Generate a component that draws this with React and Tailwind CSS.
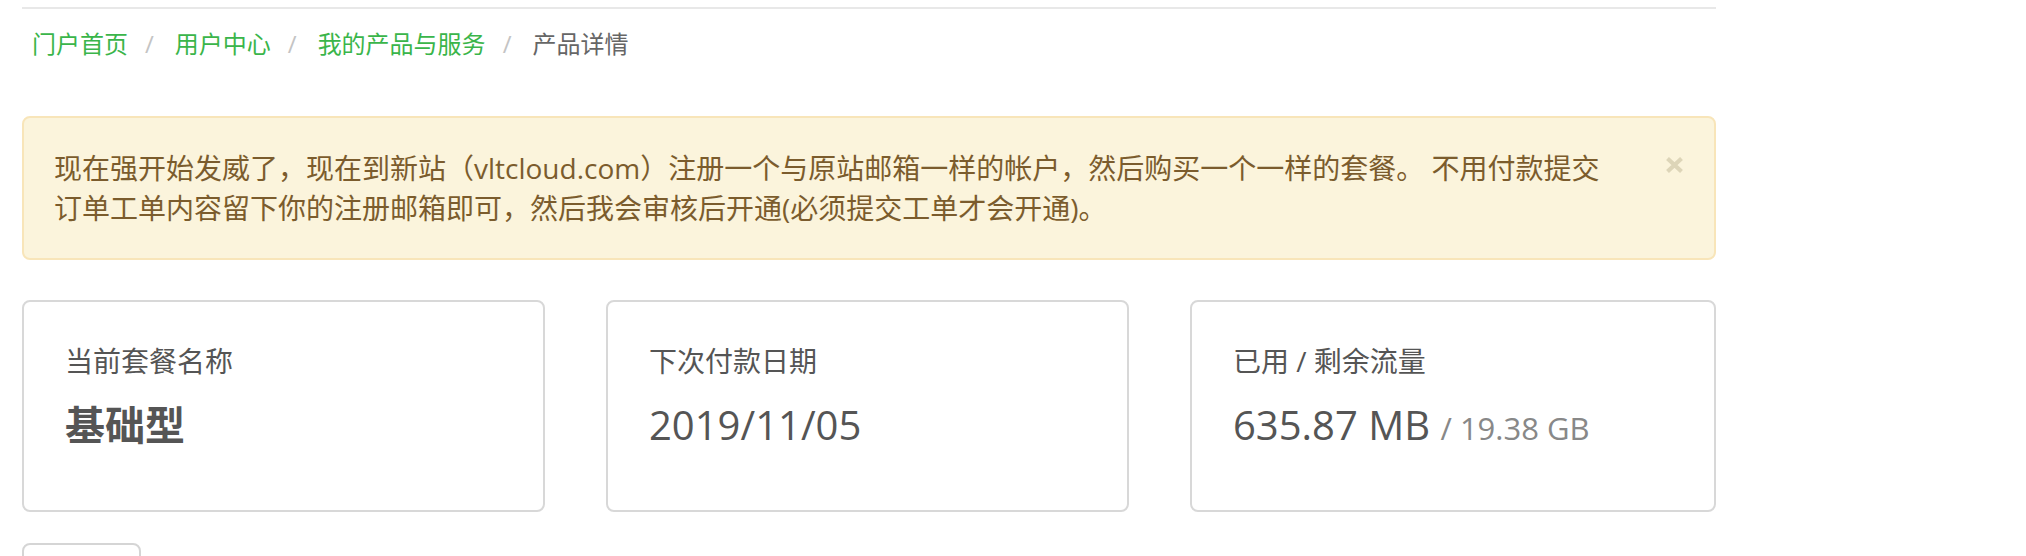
import React from 'react';

const crumbs = ['门户首页', '用户中心', '我的产品与服务'];

const StatCard = ({ title, children }) => (
  <div className="h-[212px] rounded-[8px] border-2 border-[#d8d8d8] bg-white px-[41px] pt-[39px]">
    <div className="text-[28px] leading-[40px] text-[#555]">{title}</div>
    <div className="mt-[22px] text-[40px] leading-[44px] text-[#555]">{children}</div>
  </div>
);

const App = () => {
  return (
    <div
      className="min-h-screen bg-white"
      style={{ fontFamily: '"Open Sans", "Noto Sans CJK SC", sans-serif' }}
    >
      <div className="ml-[22px] w-[1694px]">
        <div className="mt-[7px] h-[2px] bg-[#e8e8e8]" />

        {/* breadcrumb */}
        <nav className="mt-[18px] flex items-center pl-[10px] text-[24px] leading-[34px]">
          {crumbs.map((c) => (
            <React.Fragment key={c}>
              <a href="#" className="text-[#3ab54a]">{c}</a>
              <span className="ml-[17px] mr-[21px] text-[#c4c4c4]">/</span>
            </React.Fragment>
          ))}
          <span className="text-[#666]">产品详情</span>
        </nav>

        {/* notice */}
        <div className="relative mt-[55px] rounded-[8px] border-2 border-[#f8e5b9] bg-[#fbf4dc] py-[30px] pl-[30px] pr-[70px] text-[28px] leading-[40px] text-[#7b5c2d]">
          现在强开始发威了，现在到新站（vltcloud.com）注册一个与原站邮箱一样的帐户，然后购买一个一样的套餐。 不用付款提交
          <br />
          订单工单内容留下你的注册邮箱即可，然后我会审核后开通(必须提交工单才会开通)。
          <button className="absolute right-[20px] top-[27px] flex h-[40px] w-[40px] items-center justify-center">
            <svg width="19" height="18" viewBox="0 0 19 18">
              <path d="M2.5 2.5 L16.5 15.5 M16.5 2.5 L2.5 15.5" stroke="#ddd5b8" strokeWidth="4.2" strokeLinecap="butt" />
            </svg>
          </button>
        </div>

        {/* stats */}
        <div className="mt-[40px] grid grid-cols-[523px_523px_1fr] gap-x-[61px]">
          <StatCard title="当前套餐名称">
            <span className="font-bold">基础型</span>
          </StatCard>
          <StatCard title="下次付款日期">2019/11/05</StatCard>
          <StatCard title="已用 / 剩余流量">
            635.87 MB <span className="text-[31px] text-[#888]">/ 19.38 GB</span>
          </StatCard>
        </div>

        <button className="mt-[31px] h-[70px] w-[119px] rounded-[8px] border-2 border-[#d5d5d5] bg-white" />
      </div>
    </div>
  );
};

export default App;
